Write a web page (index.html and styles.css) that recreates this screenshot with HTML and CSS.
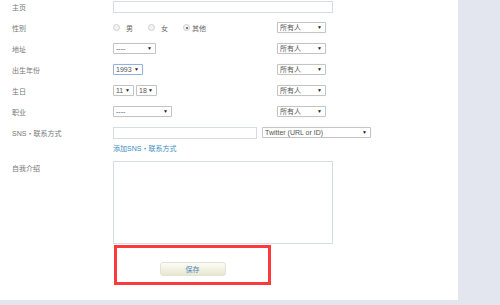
FILE: index.html
```html
<!DOCTYPE html>
<html lang="zh">
<head>
    <meta charset="UTF-8">
    <title>个人资料</title>
    <link rel="stylesheet" href="styles.css">
</head>
<body>
    <div class="panel">
        <form class="profile">
            <div class="row">
                <label class="label">主页</label>
                <input class="text wide" type="text">
            </div>
            <div class="row">
                <label class="label">性别</label>
                <div class="field radios">
                    <span class="radio"></span><span>男</span>
                    <span class="radio"></span><span>女</span>
                    <span class="radio checked"></span><span class="last">其他</span>
                </div>
                <span class="sel privacy">所有人<i>▼</i></span>
            </div>
            <div class="row">
                <label class="label">地址</label>
                <div class="field"><span class="sel addr">----<i>▼</i></span></div>
                <span class="sel privacy">所有人<i>▼</i></span>
            </div>
            <div class="row">
                <label class="label">出生年份</label>
                <div class="field"><span class="sel year focus">1993<i>▼</i></span></div>
                <span class="sel privacy">所有人<i>▼</i></span>
            </div>
            <div class="row">
                <label class="label">生日</label>
                <div class="field">
                    <span class="sel small">11<i>▼</i></span>
                    <span class="sel small">18<i>▼</i></span>
                </div>
                <span class="sel privacy">所有人<i>▼</i></span>
            </div>
            <div class="row">
                <label class="label">职业</label>
                <div class="field"><span class="sel job">----<i>▼</i></span></div>
                <span class="sel privacy">所有人<i>▼</i></span>
            </div>
            <div class="row">
                <label class="label">SNS・联系方式</label>
                <div class="field sns">
                    <input class="text sns-input" type="text">
                    <span class="sel twitter">Twitter (URL or ID)<i>▼</i></span>
                </div>
            </div>
            <div class="link-row">
                <a href="#" class="add-link">添加SNS・联系方式</a>
            </div>
            <div class="about">
                <label class="label">自我介绍</label>
                <textarea class="bio"></textarea>
            </div>
            <div class="actions">
                <button type="button" class="save">保存</button>
            </div>
        </form>
    </div>
</body>
</html>
```

FILE: styles.css
```css
body {
    margin: 0;
    background-color: #e3e6ee;
    font-family: "Liberation Sans", "Noto Sans CJK SC", sans-serif;
    font-size: 7px;
    color: #777;
    height: 305px;
    overflow: hidden;
}
.panel {
    width: 458px;
    height: 300px;
    background-color: white;
    overflow: hidden;
}
.profile {
    margin-top: -4px;
}
.row {
    display: grid;
    grid-template-columns: 113px 164px auto;
    align-items: center;
    height: 21px;
}
.label {
    padding-left: 12px;
    color: #777;
}
.text {
    box-sizing: border-box;
    height: 12px;
    border: 1px solid #d6dce6;
    padding: 0;
    margin: 0;
}
.wide {
    grid-column: 2 / 4;
    width: 220px;
}
.field {
    display: flex;
    align-items: center;
    gap: 2px;
}
.radios {
    gap: 0;
    color: #666;
}
.radio {
    width: 5px;
    height: 5px;
    border-radius: 50%;
    border: 1px solid #cfcfcf;
    background: #f3f3f3;
    margin-right: 6px;
    position: relative;
}
.radios span:not(.radio) {
    margin-right: 15px;
}
.radios .radio.checked {
    margin-right: 2px;
}
.radio.checked::after {
    content: "";
    position: absolute;
    left: 1.5px;
    top: 1.5px;
    width: 2px;
    height: 2px;
    border-radius: 50%;
    background: #555;
}
.sel {
    box-sizing: border-box;
    display: flex;
    align-items: center;
    justify-content: space-between;
    height: 11px;
    padding: 0 3px 0 2px;
    border: 1px solid #c4c4c4;
    border-radius: 1px;
    background: white;
    color: #555;
    box-shadow: 0 0 1px #ddd;
    line-height: 1;
}
.sel i {
    font-style: normal;
    font-size: 5px;
    color: #222;
}
.privacy {
    width: 49px;
}
.addr { width: 43px; }
.year { width: 30px; }
.small { width: 21px; }
.job { width: 59px; }
.focus {
    border-color: #8fb2de;
}
.sns {
    grid-column: 2 / 4;
    gap: 5px;
}
.sns-input {
    width: 144px;
}
.twitter {
    width: 109px;
    height: 11px;
}
.link-row {
    height: 10px;
    padding-left: 113px;
    display: flex;
    align-items: center;
}
.add-link {
    color: #3e8cc4;
    text-decoration: none;
}
.about {
    display: grid;
    grid-template-columns: 113px auto;
    margin-top: 8px;
}
.about .label {
    padding-top: 2px;
}
.bio {
    box-sizing: border-box;
    width: 220px;
    height: 83px;
    border: 1px solid #d6dce6;
    margin: 0;
    padding: 0;
    resize: none;
}
.actions {
    box-sizing: border-box;
    width: 157px;
    height: 40px;
    margin: 1px 0 0 114px;
    border: 3px solid #fb3b3b;
    padding-top: 14px;
    display: flex;
    justify-content: center;
    align-items: flex-start;
}
.save {
    width: 66px;
    height: 14px;
    border: 1px solid #e0e3da;
    border-radius: 3px;
    background: linear-gradient(#fcfcf6, #e8e8cf);
    color: #4a86b8;
    font-family: "Liberation Sans", "Noto Sans CJK SC", sans-serif;
    font-size: 7px;
    padding: 0;
    cursor: pointer;
}
```
